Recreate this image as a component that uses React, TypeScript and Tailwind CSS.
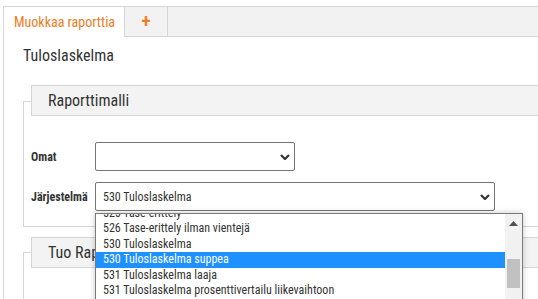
import React from 'react';

const options = [
  '525 Tase-erittely',
  '526 Tase-erittely ilman vientejä',
  '530 Tuloslaskelma',
  '530 Tuloslaskelma suppea',
  '531 Tuloslaskelma laaja',
  '531 Tuloslaskelma prosenttivertailu liikevaihtoon',
  '532 Tuloslaskelma kuukausittain',
];

const Chevron = () => (
  <svg width="10" height="6" viewBox="0 0 10 6" className="shrink-0">
    <path d="M1 1 L5 5 L9 1" fill="none" stroke="#333" strokeWidth="2.2" />
  </svg>
);

export default function App() {
  const selected = '530 Tuloslaskelma suppea';

  return (
    <div className="relative h-[299px] w-[538px] overflow-hidden bg-white font-['Roboto_Condensed',Roboto,sans-serif] text-[#333]">
      <div className="w-[760px] pl-[3px] pt-[6px]">
        {/* Tabs */}
        <div className="flex h-[31px] border-t border-[#d6d6d6] bg-[#f2f2f2]">
          <div className="flex w-[122px] items-center border-l border-r border-[#d6d6d6] bg-white pl-[10px] text-[14px] text-[#ee7d1f]">
            Muokkaa raporttia
          </div>
          <div className="flex w-[43px] items-center justify-center border-b border-r border-[#d6d6d6] pb-[1px] text-[19px] font-semibold text-[#ee7d1f]">
            +
          </div>
          <div className="flex-1 border-b border-[#d6d6d6]" />
        </div>

        {/* Panel */}
        <div className="border-l border-[#d6d6d6] pl-[19px]">
          <div className="pt-[7px] text-[16px] leading-[24px]">Tuloslaskelma</div>

          {/* Raporttimalli */}
          <div className="mt-[33px] border-b border-l border-t border-[#d6d6d6] pb-[15px] pl-[7px]">
            <div className="-mt-[17px] flex h-[31px] items-center border border-[#d6d6d6] bg-[#f3f3f3] pl-[16px] text-[16px]">
              Raporttimalli
            </div>
            <div className="mt-[26px] flex items-center">
              <div className="w-[64px] text-[12px] font-bold">Omat</div>
              <div className="flex h-[29px] w-[200px] items-center justify-end rounded-[2px] border border-[#767676] bg-white pr-[4px]">
                <Chevron />
              </div>
            </div>
            <div className="mt-[11px] flex items-center">
              <div className="w-[64px] text-[12px] font-bold">Järjestelmä</div>
              <div className="flex h-[29px] w-[400px] items-center justify-between rounded-[2px] border border-[#767676] bg-white pl-[7px] pr-[4px] text-[12px]">
                <span>530 Tuloslaskelma</span>
                <Chevron />
              </div>
            </div>
          </div>

          {/* Tuo Raporttimalli */}
          <div className="mt-[25px] h-[80px] border-l border-t border-[#d6d6d6] pl-[7px]">
            <div className="-mt-[16px] flex h-[31px] items-center border border-[#d6d6d6] bg-[#f3f3f3] pl-[16px] text-[16px]">
              Tuo Raporttimalli
            </div>
          </div>
        </div>
      </div>

      {/* Open select list */}
      <div className="absolute left-[95px] top-[213px] flex h-[100px] w-[428px] border border-[#7a7a7a] bg-white shadow-[0_0_6px_rgba(0,0,0,0.22)]">
        <div className="flex-1 overflow-hidden">
          <div className="-mt-[8.5px]">
            {options.map((o) => (
              <div
                key={o}
                className={`h-[15.5px] whitespace-nowrap pl-[7px] text-[12px] leading-[15.5px] ${
                  o === selected ? 'bg-[#1e90ff] text-white' : 'text-[#333]'
                }`}
              >
                {o}
              </div>
            ))}
          </div>
        </div>
        <div className="flex w-[17px] flex-col items-center bg-[#f1f1f1]">
          <svg width="9" height="5" viewBox="0 0 9 5" className="mt-[7px]">
            <path d="M0 5 L4.5 0 L9 5 Z" fill="#505050" />
          </svg>
          <div className="mt-[33px] h-[29px] w-[13px] bg-[#c1c1c1]" />
        </div>
      </div>
    </div>
  );
}
